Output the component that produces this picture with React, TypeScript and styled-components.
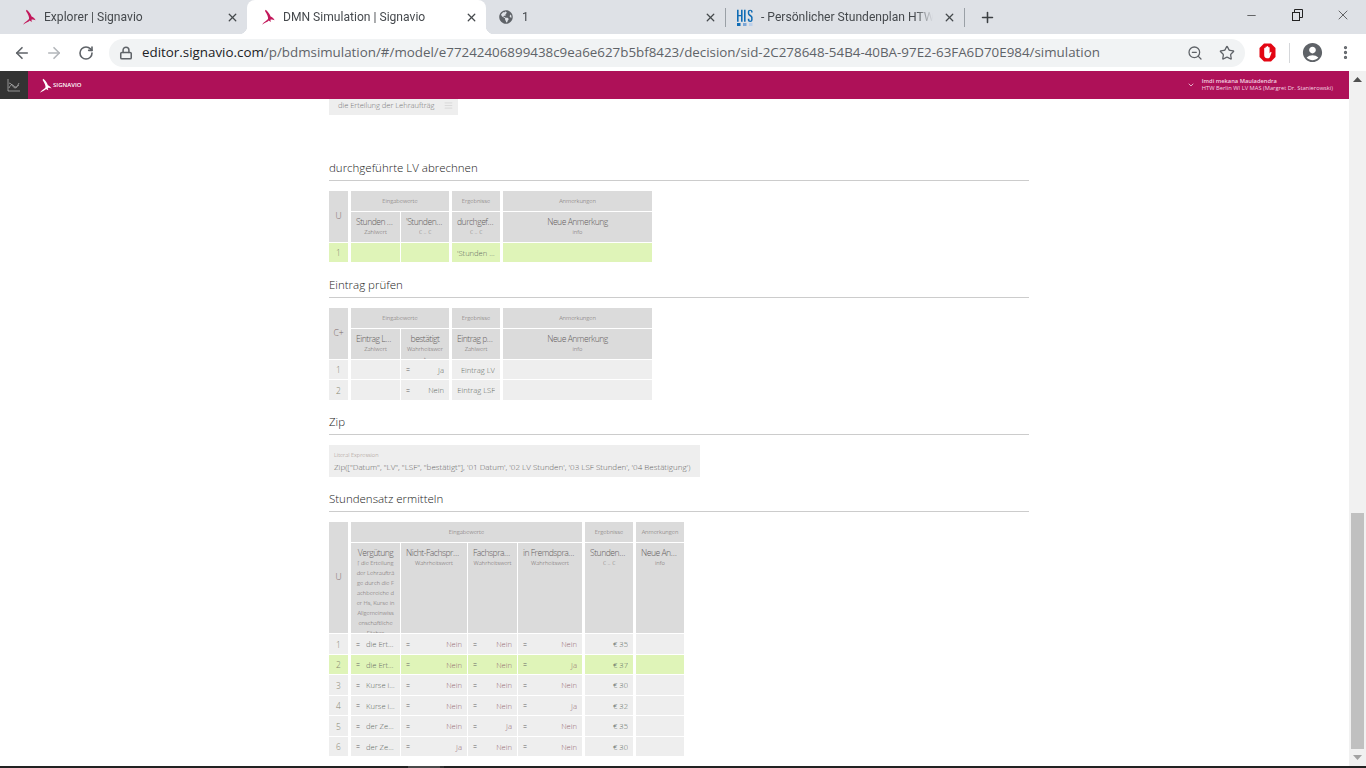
import React from "react";
import styled, { createGlobalStyle } from "styled-components";
import { ArrowLeft, ArrowRight, RotateCw, Lock, ZoomOut, Star, MoreVertical, Plus, X, Minus, ChevronDown, AlignJustify } from "lucide-react";
import { FaGlobeAmericas } from "react-icons/fa";
import { MdAccountCircle } from "react-icons/md";

const Global = createGlobalStyle`
  html, body { margin: 0; padding: 0; background: #fff; overflow: hidden; }
  * { box-sizing: border-box; }
`;

const Screen = styled.div`
  width: 1366px; height: 768px; display: flex; flex-direction: column; overflow: hidden;
  font-family: "Open Sans", "Liberation Sans", sans-serif;
`;
const TabStrip = styled.div`
  height: 34px; background: #dee1e6; display: flex; padding-left: 8px; flex: none;
`;
const Tab = styled.div<{ $active?: boolean; $sep?: boolean }>`
  position: relative; width: 239px; height: 34px; display: flex; align-items: center;
  padding: 0 7px 0 12px; gap: 8px;
  background: ${p => (p.$active ? "#fff" : "transparent")};
  border-radius: 8px 8px 0 0;
  ${p => p.$active ? `
    &::before, &::after { content: ""; position: absolute; bottom: 0; width: 8px; height: 8px; }
    &::before { left: -8px; background: radial-gradient(circle at 0 0, transparent 8px, #fff 8.5px); }
    &::after { right: -8px; background: radial-gradient(circle at 100% 0, transparent 8px, #fff 8.5px); }
  ` : ""}
  ${p => p.$sep ? `
    &::after { content: ""; position: absolute; right: -1px; top: 8px; height: 19px; width: 1px; background: #9aa0a6; }
  ` : ""}
`;
const TabTitle = styled.div`
  flex: 1; min-width: 0; white-space: nowrap; overflow: hidden;
  font: 400 12.1px Roboto, "Open Sans", sans-serif; color: #45494d;
  -webkit-mask-image: linear-gradient(90deg, #000 90%, transparent 100%);
`;
const TabClose = styled.div`
  width: 16px; height: 16px; display: flex; align-items: center; justify-content: center; color: #45494d; flex: none;
`;
const NewTab = styled.div`
  width: 18px; height: 34px; margin-left: 14px; display: flex; align-items: center; justify-content: center; color: #3c4043;
`;
const WindowControls = styled.div`
  margin-left: auto; display: flex; align-self: flex-start;
`;
const WindowButton = styled.div`
  width: 46px; height: 30px; display: flex; align-items: center; justify-content: center; color: #222;
`;
const Toolbar = styled.div`
  height: 37px; background: #fff; display: flex; align-items: center; padding-left: 6px; flex: none;
`;
const Slot = styled.div<{ $w?: number; $muted?: boolean }>`
  width: ${p => p.$w ?? 32}px; height: 28px; flex: none; display: flex; align-items: center; justify-content: center;
  color: ${p => (p.$muted ? "#b3b6ba" : "#5f6368")};
`;
const Address = styled.div`
  margin-left: 7px; width: 1136px; height: 28px; border-radius: 14px; background: #f1f3f4; flex: none;
  display: flex; align-items: center; padding: 0 2px 0 10px; color: #5f6368;
`;
const UrlText = styled.div`
  flex: 1; margin-left: 9px; padding-bottom: 2px; white-space: nowrap; font: 400 13.36px "Open Sans", sans-serif; color: #5f6368;
  b { font-weight: 400; color: #202124; }
`;
const ToolbarRule = styled.div`
  width: 1px; height: 20px; background: #d5d7da; flex: none;
`;
const Main = styled.div`
  flex: 1; min-height: 0; display: flex;
`;
const AppColumn = styled.div`
  flex: 1; min-width: 0; display: flex; flex-direction: column;
`;
const AppHeader = styled.div`
  height: 28px; flex: none; background: #ae1158; display: flex; align-items: center; color: #fff;
`;
const ChartButton = styled.div`
  width: 28px; height: 28px; background: #333; display: flex; align-items: center; justify-content: center; color: #aaa;
`;
const Brand = styled.div`
  display: flex; align-items: center; margin-left: 9px; gap: 1px;
  font: 600 6px "Open Sans", sans-serif; color: #fff;
`;
const UserArea = styled.div`
  margin-left: auto; padding-right: 16px; display: flex; align-items: center; gap: 7px;
`;
const UserLines = styled.div`
  font: 400 5.75px/7.5px "Open Sans", sans-serif; color: #f4d4e2; white-space: nowrap;
  strong { font-weight: 600; display: block; }
`;
const Content = styled.div`
  flex: 1; min-height: 0; overflow: hidden; padding-left: 329px; width: 1029px; background: #fff;
`;
const ClippedEntry = styled.div`
  width: 129px; height: 16px; background: #eee; display: flex; align-items: center; padding: 0 5px 4px 9px;
  justify-content: space-between; color: #777; font: 300 7.6px "Open Sans", sans-serif; white-space: nowrap; letter-spacing: -0.05px;
`;
const Heading = styled.div<{ $top: number }>`
  margin-top: ${p => p.$top}px; height: 23px; padding-bottom: 3px; border-bottom: 1px solid #ccc; margin-bottom: 10px;
  font: 300 11.5px/20px "Open Sans", sans-serif; color: #222;
`;
const Grid = styled.div<{ $cols: string; $rows: string }>`
  display: grid; gap: 1px; grid-template-columns: ${p => p.$cols}; grid-template-rows: ${p => p.$rows};
  width: max-content; background: #fff;
`;
const CellBase = styled.div<{ $sep?: boolean }>`
  margin-left: ${p => (p.$sep ? 2 : 0)}px; min-width: 0; overflow: hidden;
`;
const RuleCell = styled(CellBase)`
  grid-row: span 2; background: #dbdbdb; display: flex; align-items: center; justify-content: center;
  font: 300 8.6px "Open Sans", sans-serif; color: #7c6a6a; padding-bottom: 1px;
`;
const GroupCell = styled(CellBase)<{ $span: number }>`
  grid-column: span ${p => p.$span}; background: #dbdbdb; display: flex; align-items: center; justify-content: center;
  font: 300 5.8px "Open Sans", sans-serif; color: #6f6867;
`;
const ColumnCell = styled(CellBase)`
  background: #dbdbdb; padding: 4px 5px 0; text-align: center;
`;
const ColumnTitle = styled.div`
  font: 300 8.6px/12px "Open Sans", sans-serif; color: #656060; letter-spacing: -0.5px;
  white-space: nowrap; overflow: hidden; text-overflow: ellipsis;
`;
const ColumnType = styled.div`
  font: 300 5.8px/10px "Open Sans", sans-serif; color: #6e6666; margin-top: -1px; word-break: break-all; white-space: pre-line;
`;
const IndexCell = styled.div<{ $on?: boolean }>`
  background: ${p => (p.$on ? "#dff4b8" : "#eeeeee")}; display: flex; align-items: center; justify-content: center;
  font: 300 8.4px "Open Sans", sans-serif; color: #85856f;
`;
const BodyCell = styled(CellBase)<{ $on?: boolean }>`
  background: ${p => (p.$on ? "#dff4b8" : "#eeeeee")}; display: flex; align-items: center; padding: 0 5px;
  font: 300 7.6px "Open Sans", sans-serif; color: #8c7f7f; white-space: nowrap;
`;
const Eq = styled.span`
  flex: none; width: 10px; color: #666; font-size: 7px;
`;
const Value = styled.span<{ $left?: boolean; $pink?: boolean }>`
  flex: 1; min-width: 0; overflow: hidden; text-overflow: ellipsis; text-align: ${p => (p.$left ? "left" : "right")};
  color: ${p => (p.$pink ? "#94686f" : "#5f6a62")};
`;
const LiteralBox = styled.div`
  width: 371px; height: 32px; background: #eee; padding: 5px 5px 0;
`;
const LiteralLabel = styled.div`
  font: 300 5.6px/10px "Open Sans", sans-serif; color: #a09088;
`;
const LiteralText = styled.div`
  font: 300 8px/12px "Open Sans", sans-serif; color: #666; white-space: nowrap; margin-top: 1px;
`;
const ScrollBar = styled.div`
  width: 17px; flex: none; background: #f1f1f1; display: flex; flex-direction: column; align-items: center;
`;
const ScrollArrow = styled.div`
  height: 17px; flex: none; display: flex; align-items: center; justify-content: center;
`;
const Thumb = styled.div`
  width: 13px; height: 236px; background: #c0c0c0; margin-top: 425px; flex: none;
`;
const ThumbGap = styled.div`
  flex: 1;
`;
const TaskBar = styled.div`
  height: 2px; flex: none; background: #222; display: flex; padding-left: 408px;
`;
const TaskItem = styled.div`
  width: 36px; background: #4a4a4a; border-right: 4px solid #333;
`;

const Deer = ({ size, color }: { size: number; color: string }) => (
  <svg width={size} height={size} viewBox="0 0 16 16" style={{ flex: "none" }}>
    <path fill={color} d="M3 15.8C5 12.5 7.5 12 9 10 9.6 8.6 8 5 6 2L6.5.8 7.6 1.6C9.4 3.4 11 5.6 11.6 7.6 13 8 14.6 9.4 15.6 11.2 14 10.4 12.6 10.2 11.6 10.6 11.4 11.4 11.6 12.4 12.2 13 11 12.6 10.2 12 9.8 11.6 8 13.4 5.6 14 3 15.8Z" />
  </svg>
);
const HisLogo = () => (
  <svg width="16" height="17" viewBox="0 0 16 17" style={{ flex: "none" }}>
    <path transform="scale(1,.85)" fill="#0f6cb5" d="M0 1h1.6v6H4V1h1.6v14H4V8.6H1.6V15H0zM7 1h1.6v14H7zM15.6 4.2h-1.5V3q0-.8-.9-.8t-.9.8v2.2q0 .6.6 1l1.6 1.4q1.1 1 1.1 2.2V13q0 2.2-2.4 2.2T10.8 13v-1.6h1.6V13q0 .8.8.8t.9-.8v-2.6q0-.7-.6-1.2L12 7.8q-1.2-1-1.2-2.4V3q0-2.2 2.4-2.2T15.6 3z" />
    <rect x="0" y="14" width="3.5" height="3" fill="#0f6cb5" />
    <rect x="6" y="14" width="3.5" height="3" fill="#7aa6d6" />
    <rect x="12" y="14" width="3.5" height="3" fill="#bcd0ea" />
  </svg>
);
const StopHand = () => (
  <svg width="17" height="19" viewBox="0 0 17 19">
    <path fill="#e30613" d="M5 .5h7L16.5 5v9L12 18.5H5L.5 14V5z" />
    <path fill="#fff" d="M5.2 9.5V5.4c0-1 1.3-1 1.3 0V4.2c0-1 1.4-1 1.4 0v-.4c0-1 1.4-1 1.4 0v.9c0-1 1.3-1 1.3 0v5.9l.6-1.2c.5-1 1.6-.5 1.2.5l-1.4 3.8c-.4 1-1.1 1.6-2.2 1.6H8c-1.5 0-2.8-1.3-2.8-3z" />
  </svg>
);
const Restore = () => (
  <svg width="12" height="12" viewBox="0 0 12 12" fill="none" stroke="#222" strokeWidth="1">
    <rect x="1.5" y="3.5" width="7" height="8" />
    <path d="M3.5 3.5V.5h8v8h-3" />
  </svg>
);
const ChartIcon = () => (
  <svg width="14" height="14" viewBox="0 0 14 14" fill="none" stroke="#bdbdbd" strokeWidth="0.7">
    <path d="M1 1v12h12" />
    <path d="M2 10c2-4 3-4 5-2s3 1 5-3" />
    <path d="M2 5c3 0 4 5 6 5s3-3 4-3" />
  </svg>
);

type Body = { eq?: boolean; v?: string; left?: boolean; pink?: boolean };
type Row = { n: string; on?: boolean; cells: Body[] };
type Col = { title: string; type?: string };
type Group = { label: string; span: number };
type TableData = { cols: string; rows: string; hit: string; groups: Group[]; columns: Col[]; body: Row[] };

const Decision = ({ t }: { t: TableData }) => {
  const seps = new Set<number>();
  let acc = 0;
  t.groups.forEach(g => { seps.add(acc); acc += g.span; });
  return (
    <Grid $cols={t.cols} $rows={t.rows}>
      <RuleCell>{t.hit}</RuleCell>
      {t.groups.map(g => <GroupCell key={g.label} $sep $span={g.span}>{g.label}</GroupCell>)}
      {t.columns.map((c, i) => (
        <ColumnCell key={c.title} $sep={seps.has(i)}>
          <ColumnTitle>{c.title}</ColumnTitle>
          {c.type && <ColumnType>{c.type}</ColumnType>}
        </ColumnCell>
      ))}
      {t.body.map(r => (
        <React.Fragment key={r.n}>
          <IndexCell $on={r.on}>{r.n}</IndexCell>
          {r.cells.map((c, i) => (
            <BodyCell key={i} $sep={seps.has(i)} $on={r.on}>
              {c.eq && <Eq>=</Eq>}
              {c.v && <Value $left={c.left} $pink={c.pink}>{c.v}</Value>}
            </BodyCell>
          ))}
        </React.Fragment>
      ))}
    </Grid>
  );
};

const stdGroups: Group[] = [
  { label: "Eingabewerte", span: 2 },
  { label: "Ergebnisse", span: 1 },
  { label: "Anmerkungen", span: 1 },
];
const abrechnen: TableData = {
  cols: "19px 51px 48px 50px 151px", rows: "20px 30px 19px", hit: "U", groups: stdGroups,
  columns: [
    { title: "Stunden LV gesamt", type: "Zahlwert" },
    { title: "'Stundensatz", type: "€ .. €" },
    { title: "durchgeführte LV", type: "€ .. €" },
    { title: "Neue Anmerkung", type: "info" },
  ],
  body: [{ n: "1", on: true, cells: [{}, {}, { v: "'Stunden LV gesamt'", left: true }, {}] }],
};
const eintrag: TableData = {
  cols: "19px 51px 48px 50px 151px", rows: "20px 30px 19px 20px", hit: "C+", groups: stdGroups,
  columns: [
    { title: "Eintrag LV gesamt", type: "Zahlwert" },
    { title: "bestätigt", type: "Wahrheitswert" },
    { title: "Eintrag prüfen", type: "Zahlwert" },
    { title: "Neue Anmerkung", type: "info" },
  ],
  body: [
    { n: "1", cells: [{}, { eq: true, v: "Ja" }, { v: "Eintrag LV" }, {}] },
    { n: "2", cells: [{}, { eq: true, v: "Nein" }, { v: "Eintrag LSF" }, {}] },
  ],
};
const satzRow = (n: string, first: string, a: string, b: string, c: string, euro: string, on?: boolean): Row => ({
  n, on,
  cells: [
    { eq: true, v: first, left: true },
    { eq: true, v: a, pink: true },
    { eq: true, v: b, pink: true },
    { eq: true, v: c, pink: true },
    { v: euro },
    {},
  ],
});
const stundensatz: TableData = {
  cols: "19px 51px 66px 49px 64px 50px 50px",
  rows: "20px 90px 20px 19px 20px 19px 20px 19px",
  hit: "U",
  groups: [
    { label: "Eingabewerte", span: 4 },
    { label: "Ergebnisse", span: 1 },
    { label: "Anmerkungen", span: 1 },
  ],
  columns: [
    { title: "Vergütung", type: "[ die Erteilung der Lehraufträge durch die Fachbereiche der Hs, Kurse in Allgemeinwissenschaftliche\nFächer" },
    { title: "Nicht-Fachsprachen", type: "Wahrheitswert" },
    { title: "Fachsprachen", type: "Wahrheitswert" },
    { title: "in Fremdsprachen", type: "Wahrheitswert" },
    { title: "Stundensatz", type: "€ .. €" },
    { title: "Neue Anmerkung", type: "info" },
  ],
  body: [
    satzRow("1", "die Erteilung", "Nein", "Nein", "Nein", "€ 35"),
    satzRow("2", "die Erteilung", "Nein", "Nein", "Ja", "€ 37", true),
    satzRow("3", "Kurse in All", "Nein", "Nein", "Nein", "€ 30"),
    satzRow("4", "Kurse in All", "Nein", "Nein", "Ja", "€ 32"),
    satzRow("5", "der Zeitraum", "Nein", "Ja", "Nein", "€ 35"),
    satzRow("6", "der Zeitraum", "Ja", "Nein", "Nein", "€ 30"),
  ],
};

export default function App() {
  return (
    <Screen>
      <Global />
      <TabStrip>
        <Tab>
          <Deer size={16} color="#c2185b" />
          <TabTitle>Explorer | Signavio</TabTitle>
          <TabClose><X size={13} strokeWidth={2.4} /></TabClose>
        </Tab>
        <Tab $active>
          <Deer size={16} color="#c2185b" />
          <TabTitle>DMN Simulation | Signavio</TabTitle>
          <TabClose><X size={13} strokeWidth={2.4} /></TabClose>
        </Tab>
        <Tab $sep>
          <FaGlobeAmericas size={14} color="#5f6368" style={{ flex: "none", margin: "0 1px" }} />
          <TabTitle>1</TabTitle>
          <TabClose><X size={13} strokeWidth={2.4} /></TabClose>
        </Tab>
        <Tab $sep>
          <HisLogo />
          <TabTitle>- Persönlicher Stundenplan HTW Berlin</TabTitle>
          <TabClose><X size={13} strokeWidth={2.4} /></TabClose>
        </Tab>
        <NewTab><Plus size={17} strokeWidth={2.2} /></NewTab>
        <WindowControls>
          <WindowButton><Minus size={13} strokeWidth={1.2} /></WindowButton>
          <WindowButton><Restore /></WindowButton>
          <WindowButton><X size={16} strokeWidth={1} /></WindowButton>
        </WindowControls>
      </TabStrip>
      <Toolbar>
        <Slot><ArrowLeft size={18} strokeWidth={2.2} /></Slot>
        <Slot $muted><ArrowRight size={18} strokeWidth={2.2} /></Slot>
        <Slot><RotateCw size={16} strokeWidth={2.4} /></Slot>
        <Address>
          <Lock size={14} strokeWidth={2.6} />
          <UrlText><b>editor.signavio.com</b>/p/bdmsimulation/#/model/e77242406899438c9ea6e627b5bf8423/decision/sid-2C278648-54B4-40BA-97E2-63FA6D70E984/simulation</UrlText>
          <Slot><ZoomOut size={16} strokeWidth={1.9} /></Slot>
          <Slot><Star size={16} strokeWidth={1.9} /></Slot>
        </Address>
        <Slot $w={44}><StopHand /></Slot>
        <ToolbarRule />
        <Slot $w={44}><MdAccountCircle size={23} /></Slot>
        <Slot $w={22}><MoreVertical size={17} strokeWidth={2.6} /></Slot>
      </Toolbar>
      <Main>
        <AppColumn>
          <AppHeader>
            <ChartButton><ChartIcon /></ChartButton>
            <Brand><Deer size={15} color="#fff" />SIGNAVIO</Brand>
            <UserArea>
              <ChevronDown size={8} strokeWidth={2} />
              <UserLines>
                <strong>Imdi mekana Mauladendra</strong>
                HTW Berlin WI LV MAS (Margret Dr. Stanierowski)
              </UserLines>
            </UserArea>
          </AppHeader>
          <Content>
            <ClippedEntry>die Erteilung der Lehraufträg <AlignJustify size={9} strokeWidth={0.8} color="#aaa" /></ClippedEntry>
            <Heading $top={43}>durchgeführte LV abrechnen</Heading>
            <Decision t={abrechnen} />
            <Heading $top={13}>Eintrag prüfen</Heading>
            <Decision t={eintrag} />
            <Heading $top={12}>Zip</Heading>
            <LiteralBox>
              <LiteralLabel>Literal Expression</LiteralLabel>
              <LiteralText>Zip(["Datum", "LV", "LSF", "bestätigt"], '01 Datum', '02 LV Stunden', '03 LSF Stunden', '04 Bestätigung')</LiteralText>
            </LiteralBox>
            <Heading $top={12}>Stundensatz ermitteln</Heading>
            <Decision t={stundensatz} />
          </Content>
        </AppColumn>
        <ScrollBar>
          <ScrollArrow>
            <svg width="9" height="5" viewBox="0 0 9 5"><path d="M4.5 0L9 5H0z" fill="#505050" /></svg>
          </ScrollArrow>
          <Thumb />
          <ThumbGap />
          <ScrollArrow>
            <svg width="9" height="5" viewBox="0 0 9 5"><path d="M0 0h9L4.5 5z" fill="#a3a3a3" /></svg>
          </ScrollArrow>
        </ScrollBar>
      </Main>
      <TaskBar><TaskItem /></TaskBar>
    </Screen>
  );
}
